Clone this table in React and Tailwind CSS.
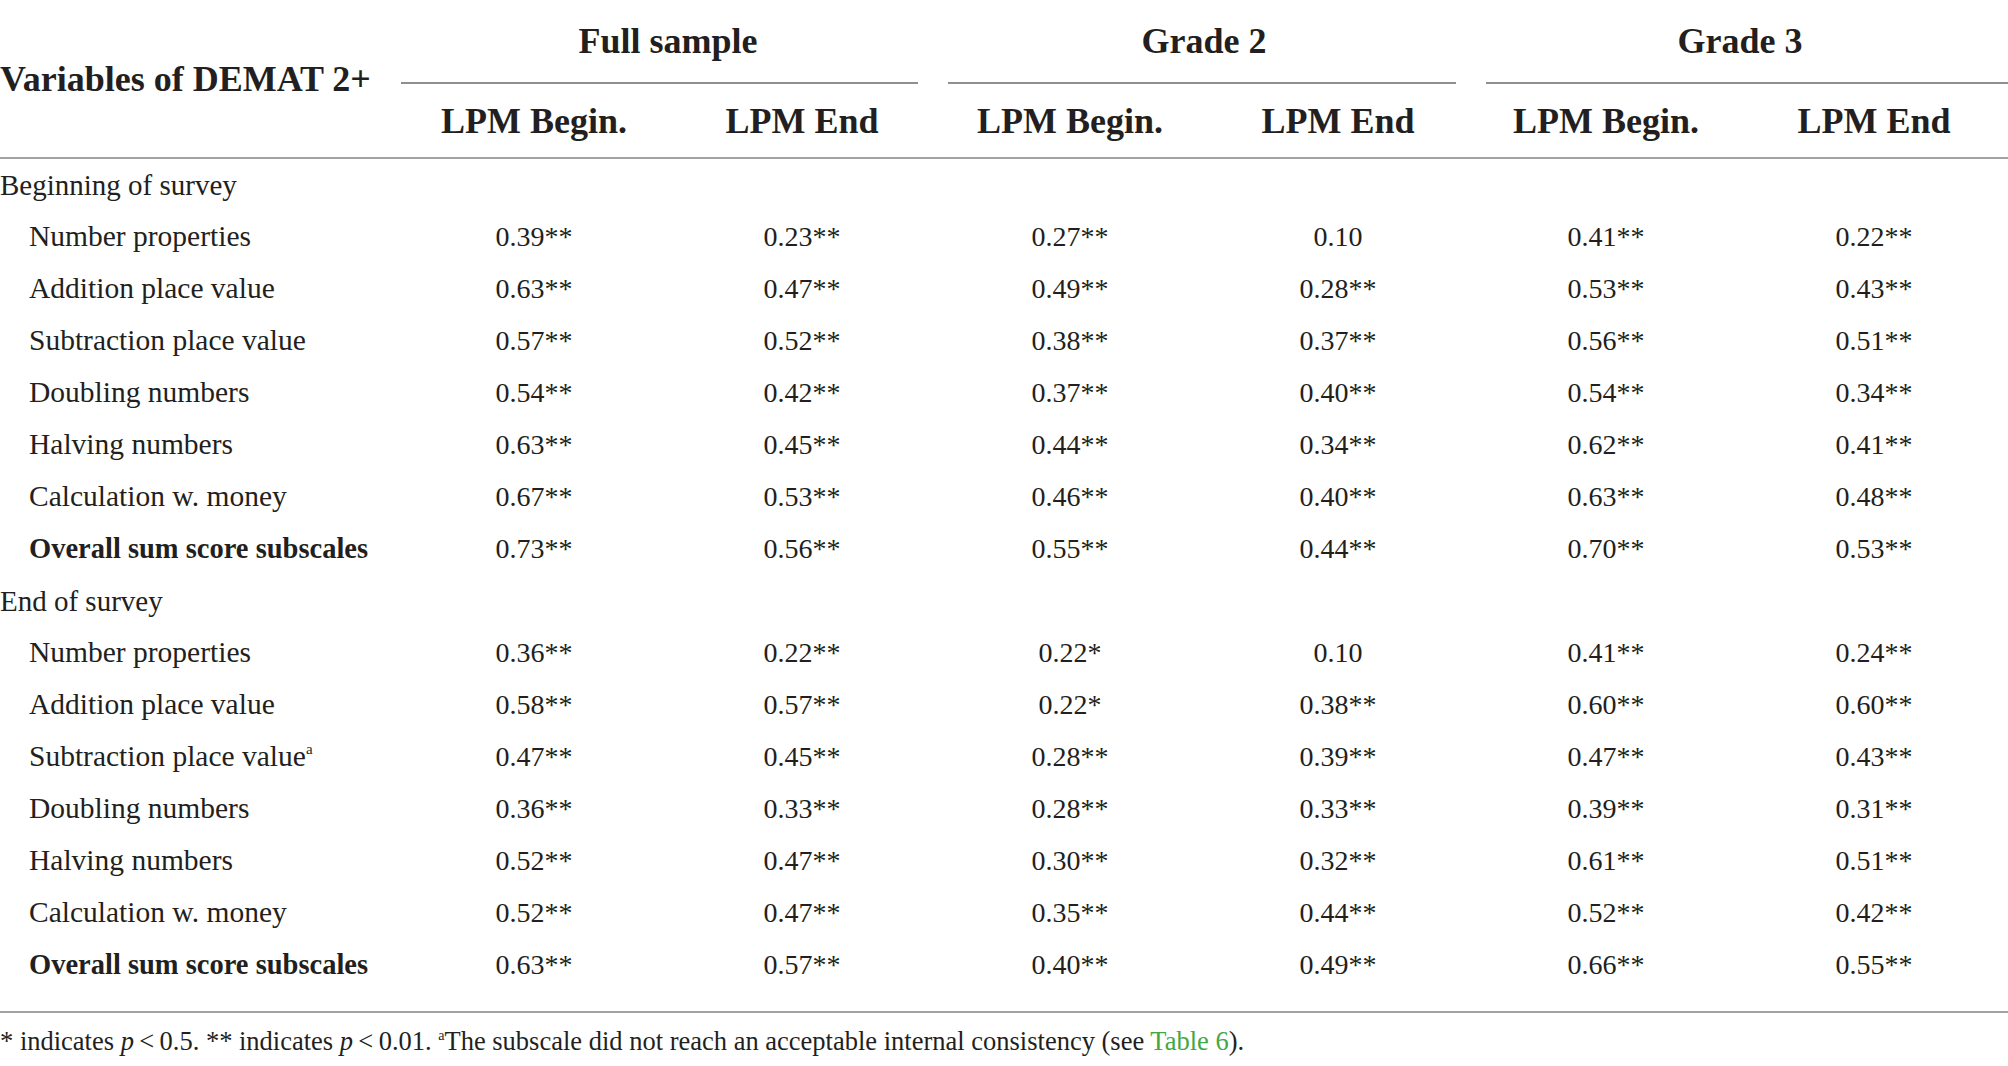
const groups = [
  { title: 'Full sample', line: 'pl-px pr-[18px]' },
  { title: 'Grade 2', line: 'pl-3 pr-4' },
  { title: 'Grade 3', line: 'pl-[14px] pr-0' }
]

const sections = [
  {
    title: 'Beginning of survey',
    rows: [
      ['Number properties', '0.39**', '0.23**', '0.27**', '0.10', '0.41**', '0.22**'],
      ['Addition place value', '0.63**', '0.47**', '0.49**', '0.28**', '0.53**', '0.43**'],
      ['Subtraction place value', '0.57**', '0.52**', '0.38**', '0.37**', '0.56**', '0.51**'],
      ['Doubling numbers', '0.54**', '0.42**', '0.37**', '0.40**', '0.54**', '0.34**'],
      ['Halving numbers', '0.63**', '0.45**', '0.44**', '0.34**', '0.62**', '0.41**'],
      ['Calculation w. money', '0.67**', '0.53**', '0.46**', '0.40**', '0.63**', '0.48**'],
      ['Overall sum score subscales', '0.73**', '0.56**', '0.55**', '0.44**', '0.70**', '0.53**', true]
    ]
  },
  {
    title: 'End of survey',
    rows: [
      ['Number properties', '0.36**', '0.22**', '0.22*', '0.10', '0.41**', '0.24**'],
      ['Addition place value', '0.58**', '0.57**', '0.22*', '0.38**', '0.60**', '0.60**'],
      ['Subtraction place value', '0.47**', '0.45**', '0.28**', '0.39**', '0.47**', '0.43**', false, 'a'],
      ['Doubling numbers', '0.36**', '0.33**', '0.28**', '0.33**', '0.39**', '0.31**'],
      ['Halving numbers', '0.52**', '0.47**', '0.30**', '0.32**', '0.61**', '0.51**'],
      ['Calculation w. money', '0.52**', '0.47**', '0.35**', '0.44**', '0.52**', '0.42**'],
      ['Overall sum score subscales', '0.63**', '0.57**', '0.40**', '0.49**', '0.66**', '0.55**', true]
    ]
  }
]

function DataRow({ row }) {
  const [label, ...rest] = row
  const values = rest.slice(0, 6)
  const bold = rest[6]
  const note = rest[7]
  return (
    <div className="grid h-[52px] grid-cols-[400px_repeat(6,268px)] items-center">
      <div className={`pl-[29px] whitespace-nowrap ${bold ? 'font-bold text-[28.5px]' : 'text-[29.5px]'}`}>
        {label}
        {note && <span className="text-[15px] relative -top-[12px]">{note}</span>}
      </div>
      {values.map((v, i) => (
        <div key={i} className="text-center whitespace-nowrap">
          {v}
        </div>
      ))}
    </div>
  )
}

export default function App() {
  return (
    <div className="w-[2008px] min-h-[1066px] bg-white text-[#231f20] font-['Liberation_Serif',serif] text-[28px] leading-none">
      {/* header */}
      <div className="grid grid-cols-[400px_repeat(6,268px)] border-b-2 border-[#a3a3a3]">
        <div className="row-span-2 flex items-center font-bold text-[36px] whitespace-nowrap">
          Variables of DEMAT 2+
        </div>
        {groups.map(g => (
          <div key={g.title} className="col-span-2 flex flex-col">
            <div className="h-[82px] flex items-center justify-center font-bold text-[36px]">
              {g.title}
            </div>
            <div className={g.line}>
              <div className="h-[2px] bg-[#8f8f8f]" />
            </div>
          </div>
        ))}
        {['LPM Begin.', 'LPM End', 'LPM Begin.', 'LPM End', 'LPM Begin.', 'LPM End'].map((h, i) => (
          <div key={i} className="h-[73px] flex items-center justify-center font-bold text-[36px] whitespace-nowrap">
            {h}
          </div>
        ))}
      </div>

      {/* body */}
      <div className="pb-5 border-b-2 border-[#a3a3a3]">
        {sections.map(s => (
          <div key={s.title}>
            <div className="h-[52px] flex items-center text-[29px]">{s.title}</div>
            {s.rows.map((r, i) => (
              <DataRow key={i} row={r} />
            ))}
          </div>
        ))}
      </div>

      {/* footnote */}
      <p className="pt-[15px] text-[26.5px] whitespace-nowrap">
        * indicates <i>p</i>{'\u2009<\u2009'}0.5. ** indicates <i>p</i>{'\u2009<\u2009'}0.01.{' '}
        <span className="text-[14px] relative -top-[10px]">a</span>The subscale did not reach an acceptable internal
        consistency (see <span className="text-[#43a843]">Table 6</span>).
      </p>
    </div>
  )
}
